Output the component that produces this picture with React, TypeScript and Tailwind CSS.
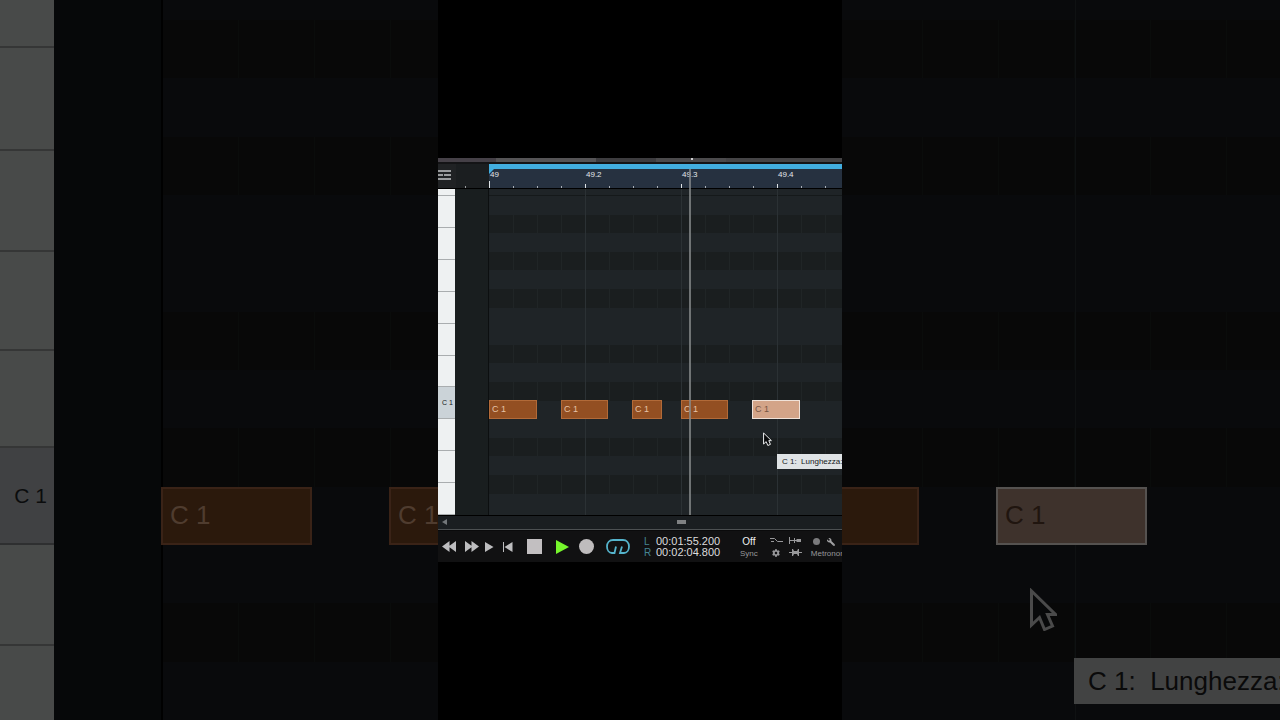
import React from 'react';
import { FaCog, FaWrench } from 'react-icons/fa';

interface NoteProps {
  label: string;
  className: string;
  selected?: boolean;
}

const ROLL_LANES = [
  'light', 'dark', 'light', 'dark', 'light', 'dark', 'light', 'light', 'dark',
  'light', 'dark', 'root', 'light', 'dark', 'light', 'dark', 'light',
];

const BACKDROP_LANES = [
  'dark', 'light', 'dark', 'light', 'light', 'dark', 'light', 'dark', 'root', 'light', 'dark', 'light',
];

const ROLL_KEYS = ['', '', '', '', '', '', 'C 1', '', '', ''];

const BEATS = ['49', '49.2', '49.3', '49.4'];

function Note({ label, className, selected = false }: NoteProps) {
  return (
    <div
      className={`absolute inset-y-0 flex items-center border pl-[2px] text-[9px] ${
        selected
          ? 'border-[#f0e2d8] bg-[#d3a488] text-[#765543]'
          : 'border-[#b26a38] bg-[#934f22] text-[#e6c3a6]'
      } ${className}`}
    >
      {label}
    </div>
  );
}

function BackdropNote({ label, className, selected = false }: NoteProps) {
  return (
    <div
      className={`absolute inset-y-0 flex items-center border-2 text-[26px] whitespace-nowrap ${
        selected
          ? 'border-[#555250] bg-[#3e322c] text-[#20150f]'
          : 'border-[#3a2317] bg-[#2b190c] text-[#4f3c2f]'
      } ${className}`}
    >
      {label}
    </div>
  );
}

function Cursor({ className }: { className: string }) {
  return (
    <svg viewBox="0 0 27 43" className={className} aria-hidden="true">
      <path
        d="M1.5 3v34l8-7.5 5 12 8-3.5-5-11.500h8z"
        fill="#08090a"
        stroke="currentColor"
        strokeWidth="3"
      />
    </svg>
  );
}

function BackdropLanes({ notes, offset }: { notes: React.ReactNode; offset: string }) {
  return (
    <div className="flex min-w-0 flex-1 flex-col">
      <div className="h-[20px] shrink-0 bg-[#090a0c]" />
      {BACKDROP_LANES.map((lane, i) => (
        <div key={i} className={`relative min-h-0 flex-1 ${lane === 'dark' ? 'bg-[#080808]' : 'bg-[#090a0c]'}`}>
          {lane === 'dark' && (
            <div className={`flex h-full overflow-hidden ${offset}`}>
              {[0, 1, 2, 3, 4, 5].map((n) => (
                <div key={n} className="w-[76px] shrink-0 border-r border-[#0a0c0b]" />
              ))}
            </div>
          )}
          {lane === 'root' && notes}
        </div>
      ))}
    </div>
  );
}

function BackdropLeft() {
  const key = 'shrink-0 border-b-2 border-[#353636] bg-[#484a49]';
  return (
    <div className="flex min-w-0 overflow-hidden">
      <div className="flex w-[54px] shrink-0 flex-col">
        <div className={`h-[48px] ${key}`} />
        <div className={`h-[103px] ${key}`} />
        <div className={`h-[101px] ${key}`} />
        <div className={`h-[99px] ${key}`} />
        <div className={`h-[97px] ${key}`} />
        <div className="flex h-[97px] shrink-0 items-center justify-end border-b-2 border-[#2e2f30] bg-[#404143] pr-[7px] text-[21px] text-[#0b0c0d]">
          C 1
        </div>
        <div className={`h-[101px] ${key}`} />
        <div className="flex-1 bg-[#484a49]" />
      </div>
      <div className="w-[109px] shrink-0 border-r-2 border-black bg-[#060809]" />
      <BackdropLanes
        offset=""
        notes={
          <>
            <BackdropNote label="C 1" className="left-[-2px] w-[151px] pl-[7px]" />
            <BackdropNote label="C 1" className="left-[226px] w-[151px] pl-[7px]" />
          </>
        }
      />
    </div>
  );
}

function BackdropRight() {
  return (
    <div className="relative flex min-w-0 overflow-hidden">
      <div className="absolute inset-y-0 left-[233px] z-10 w-px bg-[#0f1112]" />
      <BackdropLanes
        offset="pl-[5px]"
        notes={
          <div className="absolute inset-0 z-20">
            <BackdropNote label="" className="left-[-73px] w-[150px]" />
            <BackdropNote label="C 1" className="left-[154px] w-[151px] pl-[7px]" selected />
          </div>
        }
      />
      <Cursor className="absolute left-[188px] top-[588px] h-[43px] w-[27px] text-[#4a4a4a]" />
      <div className="absolute left-[232px] top-[658px] z-20 flex h-[46px] items-center whitespace-pre bg-[#424343] pl-[14px] text-[26px] text-[#0a0a0a]">
        {'C 1:  Lunghezza:'}
      </div>
    </div>
  );
}

function Ruler() {
  return (
    <div className="flex h-[24px] shrink-0 bg-[#1b1e20]">
      <div className="flex w-[18px] items-center bg-[#202224] pb-[2px]">
        <button aria-label="Track list" className="block">
          <svg viewBox="0 0 13 10" className="h-[10px] w-[13px]" fill="#9a9c9e">
            <path d="M0 0h13v2H0zM0 4h5v2H0zM6 4h7v2H6zM0 8h13v2H0z" />
          </svg>
        </button>
      </div>
      <div className="flex w-[33px] items-end justify-start pl-[9px]">
        <div className="h-[2px] w-px bg-[#9a9c9e]" />
      </div>
      <div className="relative flex flex-1 overflow-hidden border-t-[5px] border-[#42aee0] bg-[#263140]">
        <svg viewBox="0 0 5 5" className="absolute left-0 top-0 h-[5px] w-[5px]">
          <path d="M0 0h5L0 5z" fill="#42aee0" />
        </svg>
        {BEATS.map((beat, i) => (
          <div key={beat} className="relative flex w-24 shrink-0 flex-col">
            <span className="pl-px text-[8px] leading-[12px] text-[#e3e7eb]">{beat}</span>
            <div className="flex flex-1 items-end">
              <div className={`w-px bg-[#dfe3e6] ${i === 0 ? 'h-[7px]' : 'h-[4px]'}`} />
              <div className="ml-[23px] h-[2px] w-px bg-[#aab0b8]" />
              <div className="ml-[23px] h-[2px] w-px bg-[#aab0b8]" />
              <div className="ml-[23px] h-[2px] w-px bg-[#aab0b8]" />
            </div>
          </div>
        ))}
      </div>
    </div>
  );
}

function PianoRoll() {
  return (
    <div className="flex min-h-0 flex-1 border-t border-black">
      <div className="flex w-[17px] shrink-0 flex-col">
        <div className="h-[7px] border-b border-[#a9adaf] bg-[#eef1f2]" />
        {ROLL_KEYS.map((label, i) => (
          <div
            key={i}
            className={`flex flex-1 items-center justify-end border-b border-[#a9adaf] pr-[2px] text-[7px] whitespace-nowrap text-[#15181a] ${
              label ? 'bg-[#cbd3d8]' : 'bg-[#eef1f2]'
            }`}
          >
            {label}
          </div>
        ))}
      </div>
      <div className="w-[34px] shrink-0 border-r border-[#0c0f10] bg-[#191e1f]" />
      <div className="relative flex flex-1 flex-col overflow-hidden">
        <div className="h-[7px] shrink-0 border-b border-[#15191a] bg-[#1f2427]" />
        {ROLL_LANES.map((lane, i) => (
          <div key={i} className={`relative flex-1 ${lane === 'dark' ? 'bg-[#1a1e1f]' : 'bg-[#1f2427]'}`}>
            {lane === 'dark' && (
              <div className="flex h-full overflow-hidden pl-px">
                {Array.from({ length: 15 }, (_, n) => (
                  <div key={n} className="w-6 shrink-0 border-r border-[#202526]" />
                ))}
              </div>
            )}
          </div>
        ))}
        <div className="h-[3px] shrink-0 bg-[#1f2427]" />

        <div className="absolute inset-0 flex pl-px">
          {BEATS.map((beat) => (
            <div key={beat} className="w-24 shrink-0 border-r border-[#2b3134]" />
          ))}
        </div>
        <div className="absolute inset-x-0 top-[211px] h-[19px]">
          <Note label="C 1" className="left-0 w-[48px]" />
          <Note label="C 1" className="left-[72px] w-[47px]" />
          <Note label="C 1" className="left-[143px] w-[30px]" />
          <Note label="C 1" className="left-[192px] w-[47px]" />
          <Note label="C 1" className="left-[263px] w-[48px]" selected />
        </div>
        <Cursor className="absolute left-[274px] top-[243px] h-[14px] w-[9px] text-[#f1f3f4]" />
        <div className="absolute left-[288px] top-[265px] flex h-[15px] items-center whitespace-pre bg-[#dfe3e5] px-[5px] text-[8px] text-[#15181a]">
          {'C 1:  Lunghezza:'}
        </div>
      </div>
    </div>
  );
}

function Transport() {
  return (
    <div className="flex h-[32px] shrink-0 items-center overflow-hidden border-t border-[#0a0a0b] bg-[#111112] pl-1 text-[#bdbdbf]">
      <button aria-label="Rewind" className="shrink-0">
        <svg viewBox="0 0 14 11" className="h-[11px] w-[14px]" fill="currentColor">
          <path d="M7.500 0v11L0 5.500zM14 0v11L6.500 5.500z" />
        </svg>
      </button>
      <button aria-label="Fast forward" className="ml-[9px] shrink-0">
        <svg viewBox="0 0 14 11" className="h-[11px] w-[14px]" fill="currentColor">
          <path d="M0 0v11l7.500-5.500zM6.500 0v11L14 5.500z" />
        </svg>
      </button>
      <button aria-label="Next marker" className="ml-[6px] shrink-0">
        <svg viewBox="0 0 9 10" className="h-[10px] w-[9px]" fill="currentColor">
          <path d="M0 0v10l8.500-5z" />
        </svg>
      </button>
      <button aria-label="Return to start" className="ml-[9px] shrink-0">
        <svg viewBox="0 0 10 10" className="h-[10px] w-[10px]" fill="currentColor">
          <path d="M0 0h1v10H0zM9.500 0v10L1.500 5z" />
        </svg>
      </button>
      <button aria-label="Stop" className="ml-[14px] h-[15px] w-[15px] shrink-0 bg-[#c2bfc1]" />
      <button aria-label="Play" className="ml-[14px] shrink-0">
        <svg viewBox="0 0 13 14" className="h-[14px] w-[13px]">
          <path d="M0 0v14l13-7z" fill="#76f62c" />
        </svg>
      </button>
      <button aria-label="Record" className="ml-[10px] h-[15px] w-[15px] shrink-0 rounded-full bg-[#bfbcbd]" />
      <button aria-label="Loop" className="ml-[12px] shrink-0">
        <svg viewBox="0 0 24 15" className="h-[15px] w-[24px]" fill="none" stroke="#55b4cc" strokeWidth="1.800">
          <path d="M10 7.500 8.500 14H6C3 14 1 11 1 7.500 1 3.500 3.500 1 7 1h10c3.500 0 6 2.500 6 6.500 0 3.500-2 6.500-5 6.500h-4l2-6.500" />
        </svg>
      </button>
      <div className="ml-[14px] grid shrink-0 grid-cols-[12px_64px] text-[10px] leading-[11px]">
        <span className="text-[#458494]">L</span>
        <span className="text-[11px] text-[#dcdcde]">00:01:55.200</span>
        <span className="text-[#458494]">R</span>
        <span className="text-[11px] text-[#dcdcde]">00:02:04.800</span>
      </div>
      <div className="ml-[20px] flex shrink-0 flex-col items-center pt-[2px]">
        <button className="text-[10px] leading-[12px] text-[#f0f0f1]">Off</button>
        <span className="text-[8px] leading-[12px] text-[#98989a]">Sync</span>
      </div>
      <div className="ml-[12px] grid shrink-0 grid-cols-[13px_13px] items-center justify-items-center gap-x-[6px] text-[#98989a]">
        <button aria-label="Punch curve" className="flex h-[12px] items-center">
          <svg viewBox="0 0 13 7" className="h-[7px] w-[13px]" fill="none" stroke="currentColor">
            <path d="M0 1.500h4.500l3 3H13M1 4.500h3" />
          </svg>
        </button>
        <button aria-label="Punch in" className="flex h-[12px] items-center">
          <svg viewBox="0 0 12 7" className="h-[7px] w-[12px]" fill="currentColor">
            <path d="M0 0h1v7H0zM1 3h4v1H1zM5 1h1v5H5zM6 3h1l1-1h4v3H8L7 4H6z" />
          </svg>
        </button>
        <button aria-label="Settings" className="flex h-[12px] items-center">
          <FaCog size={8} />
        </button>
        <button aria-label="Auto punch" className="flex h-[12px] items-center">
          <svg viewBox="0 0 13 7" className="h-[7px] w-[13px]" fill="currentColor">
            <path d="M0 3h3v1H0zM3 0h1l1 2h3l1-2h1v7H9L8 5H5L4 7H3zM10 3h3v1h-3z" />
          </svg>
        </button>
      </div>
      <div className="ml-[9px] flex shrink-0 flex-col pt-[2px]">
        <div className="flex h-[12px] items-center gap-[7px] pl-[2px] text-[#a2a2a4]">
          <button aria-label="Metronome on" className="h-[7px] w-[7px] rounded-full bg-[#7b7b7d]" />
          <button aria-label="Metronome setup" className="-scale-x-100">
            <FaWrench size={8} />
          </button>
        </div>
        <span className="text-[8px] leading-[12px] text-[#98989a]">Metronom</span>
      </div>
    </div>
  );
}

export default function App() {
  return (
    <div className="relative grid h-screen grid-cols-[1fr_404px_1fr] grid-rows-[100%] overflow-hidden bg-black font-['Liberation_Sans',Arial,sans-serif]">
      <BackdropLeft />
      <main className="flex min-w-0 flex-col justify-center bg-black">
        <div className="relative flex aspect-square w-full flex-col overflow-hidden">
          <div className="flex h-[6px] shrink-0 border-b-2 border-[#141416] bg-[#454446]">
            <div className="w-[58px] bg-[#454047]" />
            <div className="w-[100px] bg-[#555456]" />
            <div className="w-[60px] bg-[#3d3c3f]" />
            <div className="flex w-[70px] bg-[#4b4a4c] pl-[35px]">
              <div className="h-[2px] w-[2px] bg-[#d0d0d2]" />
            </div>
          </div>
          <Ruler />
          <PianoRoll />
          <div className="absolute left-[251px] top-[11px] h-[346px] w-[2px] bg-[#85888a]/80" />
          <div className="flex h-[15px] shrink-0 items-center border-t border-b border-t-black border-b-[#4c5052] bg-[#1a1e21] pb-[2px] pl-1">
            <button aria-label="Scroll left">
              <svg viewBox="0 0 5 6" className="h-[6px] w-[5px]" fill="#73777a">
                <path d="M5 0v6L0 3z" />
              </svg>
            </button>
            <div className="ml-[230px] h-[4px] w-[9px] bg-[#7f8183]" />
          </div>
          <Transport />
        </div>
      </main>
      <BackdropRight />
    </div>
  );
}
